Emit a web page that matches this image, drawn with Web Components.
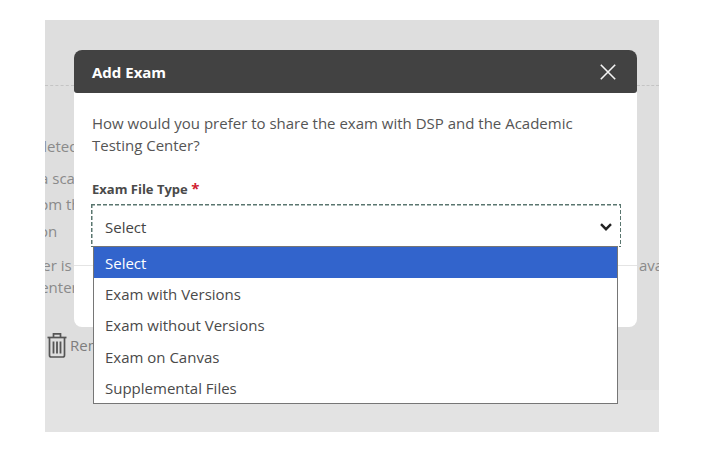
<!DOCTYPE html>
<html lang="en">
<head>
<meta charset="utf-8">
<title>Add Exam</title>
<style>
html,body{margin:0;background:#fff}
body{padding:20px 48px 22px 45px;font:15px/22px "Open Sans",sans-serif;width:614px;box-sizing:content-box}
</style>
</head>
<body>
<exam-stage>
  <gutter-line slot="left" y="146" shift="-41">completed</gutter-line>
  <gutter-line slot="left" y="178" shift="-5">a scan</gutter-line>
  <gutter-line slot="left" y="204" shift="-17">from the</gutter-line>
  <gutter-line slot="left" y="231" shift="-6">on</gutter-line>
  <gutter-line slot="left" y="265" shift="-8">ter is</gutter-line>
  <gutter-line slot="left" y="287" shift="-12">center</gutter-line>
  <remove-action slot="left"></remove-action>
  <gutter-line slot="right" y="265" shift="2">available</gutter-line>
  <exam-modal heading="Add Exam">
    <p>How would you prefer to share the exam with DSP and the Academic Testing Center?</p>
    <exam-select label="Exam File Type" value="Select">
      <exam-option selected>Select</exam-option>
      <exam-option>Exam with Versions</exam-option>
      <exam-option>Exam without Versions</exam-option>
      <exam-option>Exam on Canvas</exam-option>
      <exam-option>Supplemental Files</exam-option>
    </exam-select>
  </exam-modal>
</exam-stage>
<script>
function define(name, css, html, extra){
  customElements.define(name, class extends HTMLElement{
    constructor(){
      super();
      const r=this.attachShadow({mode:'open'});
      r.innerHTML='<style>'+css+'</style>'+(typeof html==='function'?html(this):html);
    }
    connectedCallback(){ if(extra) extra(this); }
  });
}
define('exam-stage',`
:host{display:block;height:412px;background:#dedede;overflow:hidden;position:relative}
.main{display:grid;grid-template-columns:29px 563px 22px;height:370px}
.gut{position:relative;display:flex;flex-direction:column;color:#8a8a8a}
.top{margin-top:65px;height:0;border-top:1px dashed #c4c4c4}
.mid{padding-top:30px;height:277px;box-sizing:content-box}
.band{height:42px;background:#e3e3e3}
`,`<div class="main">
<div class="gut"><div class="top"></div><slot name="left"></slot></div>
<div class="mid"><slot></slot></div>
<div class="gut"><div class="top"></div><slot name="right"></slot></div>
</div><div class="band"></div>`);
define('gutter-line',`
:host{display:block;position:absolute;left:0;right:0;height:22px;overflow:hidden;white-space:nowrap;font-size:15px;line-height:22px;color:#8a8a8a}
span{display:inline-block}
`,el=>`<span style="margin-left:${el.getAttribute('shift')}px"><slot></slot></span>`,
el=>{el.style.top=(+el.getAttribute('y')-20-11)+'px';});
define('remove-action',`
:host{display:flex;position:absolute;left:2px;top:311px;align-items:center;gap:3px;color:#7d7d7d;white-space:nowrap;height:27px;font-size:15px}
svg{display:block;flex:none}
`,`<svg width="20" height="26" viewBox="0 0 20 26" fill="none" stroke="#555" stroke-width="1.7">
<path d="M.5 5.5h19"/><path d="M6.5 5V1.8h7V5"/><path d="M2.5 6v17.2c0 1 .8 1.8 1.8 1.8h11.4c1 0 1.8-.8 1.8-1.8V6"/>
<path d="M6.5 9.5v12M10 9.5v12M13.5 9.5v12" stroke-width="1.8"/></svg><span>Remove</span>`);
define('exam-modal',`
:host{display:block;height:277px;background:#fff;border-radius:8px;position:relative}
header{height:43px;background:#424242;color:#fff;border-radius:8px 8px 3px 3px;display:flex;align-items:center;justify-content:space-between;padding:0 21px 0 18px;font-weight:700;font-size:15px}
svg{display:block}
.body{padding:19px 18px 0;color:#555;font-size:15px;line-height:22px}
::slotted(p){margin:0 0 22px;padding-right:40px}
`,el=>`<header><span>${el.getAttribute('heading')}</span>
<svg width="16" height="16" viewBox="0 0 16 16" stroke="#f4f4f4" stroke-width="1.6"><path d="M.8.8l14.4 14.4M15.2.8L.8 15.2"/></svg></header>
<div class="body"><slot></slot></div>`);
define('exam-select',`
:host{display:block;position:relative}
label{display:block;font-weight:700;font-size:13px;line-height:20px;color:#4a4a4a;margin-bottom:5px}
i{font-style:normal;color:#d0202e;font-size:15px}
.outline{margin:0 -2px 0 -1px;padding:2px;height:43px;box-sizing:border-box;
  background:
    repeating-linear-gradient(90deg,#5a766f 0 4px,transparent 4px 6px) top/100% 1.5px no-repeat,
    repeating-linear-gradient(90deg,#5a766f 0 4px,transparent 4px 6px) bottom/100% 1.5px no-repeat,
    repeating-linear-gradient(180deg,#5a766f 0 4px,transparent 4px 6px) left/1.5px 100% no-repeat,
    repeating-linear-gradient(180deg,#5a766f 0 4px,transparent 4px 6px) right/1.5px 100% no-repeat}
.trigger{height:39px;box-sizing:border-box;background:#fff;display:flex;align-items:center;justify-content:space-between;padding:2px 7px 0 12px;color:#444}
svg{display:block}
.hr{position:absolute;left:-18px;right:-18px;top:87px;border-top:1px solid #e4e4e4}
.list{position:absolute;left:1px;top:68px;width:525px;height:158px;box-sizing:border-box;background:#fff;border:1px solid #767676}
`,el=>`<label>${el.getAttribute('label')} <i>*</i></label>
<div class="outline"><div class="trigger"><span>${el.getAttribute('value')}</span>
<svg width="12" height="8" viewBox="0 0 12 8" fill="none" stroke="#222" stroke-width="2.4"><path d="M1 1.2l5 5 5-5"/></svg></div></div>
<div class="hr"></div><div class="list"><slot></slot></div>`);
define('exam-option',`
:host{display:flex;align-items:center;height:31.3px;padding:0 11px;color:#4a4a4a;font-size:15px;box-sizing:border-box}
:host([selected]){background:#3264cc;color:#fff}
`,`<slot></slot>`);
</script>
</body>
</html>
